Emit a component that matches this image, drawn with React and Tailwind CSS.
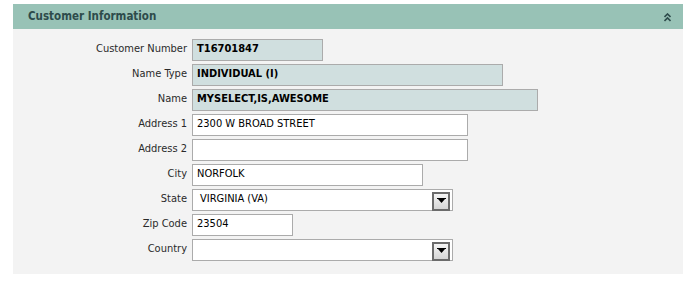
import React from "react";

const font = { fontFamily: '"DejaVu Sans Condensed", "Liberation Sans", sans-serif' };

function Arrow() {
  return (
    <div className="absolute right-[2px] top-[2px] w-[18px] h-[19px] border-2 border-[#6b6b6b] bg-gradient-to-b from-[#f4f4f4] to-[#d6d6d6] flex items-center justify-center">
      <svg width="9" height="6" viewBox="0 0 9 6">
        <rect x="0" y="0" width="9" height="1" fill="#000" />
        <polygon points="1,1 8,1 4.5,5" fill="#000" />
      </svg>
    </div>
  );
}

function Row({ label, children }) {
  return (
    <div className="flex items-center h-[25px]">
      <div className="w-[179px] pr-[5px] text-right text-[11px] text-[#2a2a2a]">{label}</div>
      {children}
    </div>
  );
}

function Field({ w, value, ro, select, indent }) {
  return (
    <div
      className={`relative h-[22px] border border-[#ababab] flex items-center text-[11px] ${
        ro ? "bg-[#d0dfdf] font-bold text-black pl-[4px]" : "bg-white text-black pl-[4px]"
      } ${indent ? "pl-[7px]" : ""}`}
      style={{ width: w }}
    >
      <span>{value}</span>
      {select && <Arrow />}
    </div>
  );
}

export default function App() {
  return (
    <div className="w-[699px] h-[282px] bg-white pt-[4px] pl-[13px]" style={font}>
      <div className="w-[670px]">
        <div className="h-[25px] bg-[#98c2b6] flex items-center justify-between pl-[15px] pr-[12px]">
          <span className="text-[11.5px] font-bold text-[#2d4b4b]">Customer Information</span>
          <svg width="7" height="9" viewBox="0 0 7 9" className="mt-[1px]">
            <path d="M0.5 4 L3.5 1 L6.5 4 M0.5 8 L3.5 5 L6.5 8" stroke="#2d4b4b" strokeWidth="1.6" fill="none" />
          </svg>
        </div>
        <div className="bg-[#f3f3f3] pt-[8px] pb-[12px]">
          <Row label="Customer Number"><Field w={131} value="T16701847" ro /></Row>
          <Row label="Name Type"><Field w={311} value="INDIVIDUAL (I)" ro /></Row>
          <Row label="Name"><Field w={346} value="MYSELECT,IS,AWESOME" ro /></Row>
          <Row label="Address 1"><Field w={276} value="2300 W BROAD STREET" /></Row>
          <Row label="Address 2"><Field w={276} value="" /></Row>
          <Row label="City"><Field w={231} value="NORFOLK" /></Row>
          <Row label="State"><Field w={261} value="VIRGINIA (VA)" select indent /></Row>
          <Row label="Zip Code"><Field w={101} value="23504" /></Row>
          <Row label="Country"><Field w={261} value="" select /></Row>
        </div>
      </div>
    </div>
  );
}
